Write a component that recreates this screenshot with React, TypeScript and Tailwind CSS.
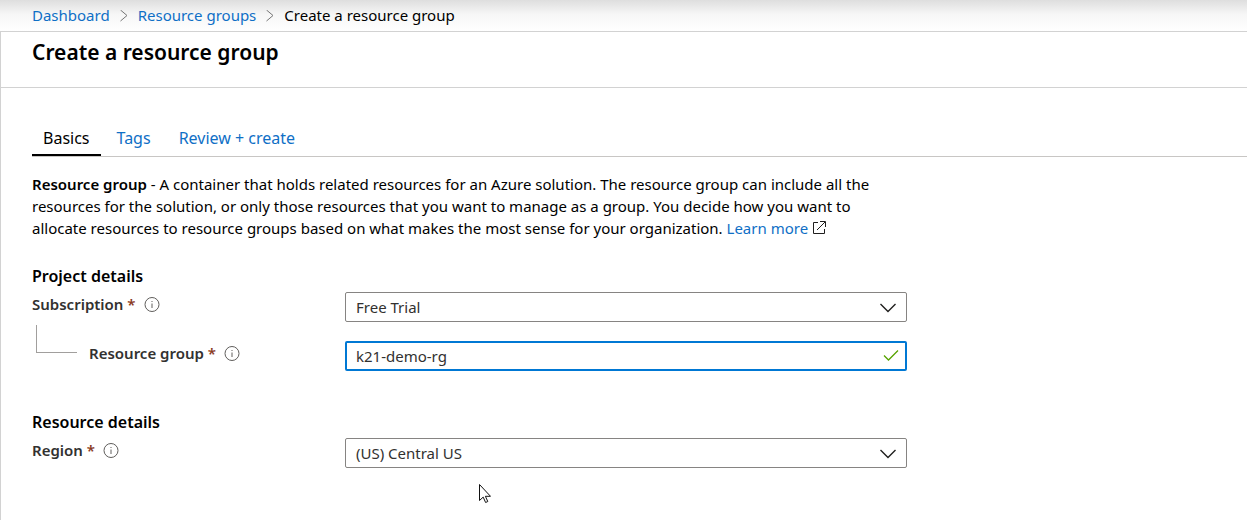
import React from 'react';

interface FieldLabelProps {
  htmlFor: string;
  text: string;
}

const InfoIcon = () => (
  <svg className="h-4 w-4 shrink-0" viewBox="0 0 16 16" fill="none" aria-hidden="true">
    <circle cx="8" cy="8.5" r="7" stroke="#605e5c" />
    <path d="M8 7.5v4.5" stroke="#605e5c" />
    <path d="M8 5v1" stroke="#605e5c" />
  </svg>
);

const CrumbChevron = () => (
  <svg className="h-3 w-2 shrink-0" viewBox="0 0 8 12" fill="none" aria-hidden="true">
    <path d="M.5 0 7 5.5.5 11" stroke="#767676" />
  </svg>
);

const FieldLabel: React.FC<FieldLabelProps> = ({ htmlFor, text }) => (
  <div className="flex items-center gap-2 leading-5">
    <label htmlFor={htmlFor} className="font-semibold text-[#323130]">
      {text} <span className="text-[#8a3a1e]">*</span>
    </label>
    <InfoIcon />
  </div>
);

const SelectField: React.FC<{ id: string; value: string }> = ({ id, value }) => (
  <div className="relative min-w-0 flex-1">
    <select
      id={id}
      defaultValue={value}
      className="block h-[30px] w-full appearance-none rounded-xs border border-[#868482] bg-white pr-10 pl-2.5 text-[#323130]"
    >
      <option value={value}>{value}</option>
    </select>
    <svg className="pointer-events-none absolute top-2.5 right-2.5 h-3 w-[18px]" viewBox="0 0 18 12" fill="none" aria-hidden="true">
      <path d="M1.5 2 9 9.5 16.5 2" stroke="#201f1e" strokeWidth="1.4" />
    </svg>
  </div>
);

export default function App() {
  return (
    <div className="font-['Noto_Sans','Open_Sans',sans-serif] text-[15px] text-black">
      <nav aria-label="Breadcrumb" className="flex h-[31px] items-center gap-2.5 bg-linear-to-b from-[#dedede] via-[#f6f6f6] via-45% to-white pl-8">
        <a href="#" className="text-[#0f6fc6]">Dashboard</a>
        <CrumbChevron />
        <a href="#" className="text-[#0f6fc6]">Resource groups</a>
        <CrumbChevron />
        <span>Create a resource group</span>
      </nav>

      <main className="relative min-h-[calc(100vh-31px)] border-t border-l border-[#d2d2d2]">
        <header className="h-14 border-b border-[#d2d2d2] pl-[31px]">
          <h1 className="pt-1.5 text-[21px] leading-7 font-semibold">Create a resource group</h1>
        </header>

        <div className="pt-[34px] pl-[31px]">
          <div role="tablist" className="flex h-[35px] border-b border-[#c8c6c4] text-base leading-6">
            <button role="tab" aria-selected="true" className="border-b-2 border-black px-[11px]">Basics</button>
            <button role="tab" aria-selected="false" className="border-b-2 border-transparent px-4 text-[#0f6fc6]">Tags</button>
            <button role="tab" aria-selected="false" className="border-b-2 border-transparent px-3 text-[#0f6fc6]">Review + create</button>
          </div>

          <p className="mt-4 max-w-[875px] leading-[22px]">
            <b className="font-semibold">Resource group</b> - A container that holds related resources for an Azure solution. The resource group can include all the
            resources for the solution, or only those resources that you want to manage as a group. You decide how you want to
            allocate resources to resource groups based on what makes the most sense for your organization.{' '}
            <a href="#" className="text-[#0f6fc6]">
              Learn more
              <svg className="ml-1 inline-block h-3.5 w-3.5 align-[-1px]" viewBox="0 0 14 14" fill="none" aria-hidden="true">
                <path d="M6 1.5H1.5v11h11V8M8 .5h5.5V6M13 1 5 9" stroke="#201f1e" />
              </svg>
            </a>
          </p>

          <form className="max-w-[875px]">
            <h2 className="mt-[25px] text-base leading-6 font-semibold">Project details</h2>
            <div className="mt-1 flex">
              <div className="w-[313px] pt-0.5">
                <FieldLabel htmlFor="subscription" text="Subscription" />
              </div>
              <SelectField id="subscription" value="Free Trial" />
            </div>

            <div className="mt-[19px] flex">
              <div className="flex w-[313px] gap-3">
                <div className="-mt-4 ml-1 h-7 w-[41px] border-b border-l border-[#a19f9d]" />
                <div className="pt-0.5">
                  <FieldLabel htmlFor="resource-group" text="Resource group" />
                </div>
              </div>
              <div className="relative min-w-0 flex-1">
                <input
                  id="resource-group"
                  type="text"
                  defaultValue="k21-demo-rg"
                  className="block h-[30px] w-full rounded-xs border-2 border-[#0078d4] bg-white pr-9 pl-[9px] text-[#323130] outline-none"
                />
                <svg className="pointer-events-none absolute top-2 right-2 h-3 w-4" viewBox="0 0 16 12" fill="none" aria-hidden="true">
                  <path d="M1 6.5 5.5 11 15 1.5" stroke="#57a300" strokeWidth="1.3" />
                </svg>
              </div>
            </div>

            <h2 className="mt-[39px] text-base leading-6 font-semibold">Resource details</h2>
            <div className="mt-1 flex">
              <div className="w-[313px] pt-0.5">
                <FieldLabel htmlFor="region" text="Region" />
              </div>
              <SelectField id="region" value="(US) Central US" />
            </div>
          </form>
        </div>

        {/* Mouse pointer */}
        <svg className="pointer-events-none absolute top-[452px] left-[478px] h-5 w-3" viewBox="0 0 12 20" aria-hidden="true">
          <path d="M.5.5v16l3.7-3.4 2.4 5.4 2.2-1-2.4-5.2h5.1z" fill="#fff" stroke="#111" />
        </svg>
      </main>
    </div>
  );
}
